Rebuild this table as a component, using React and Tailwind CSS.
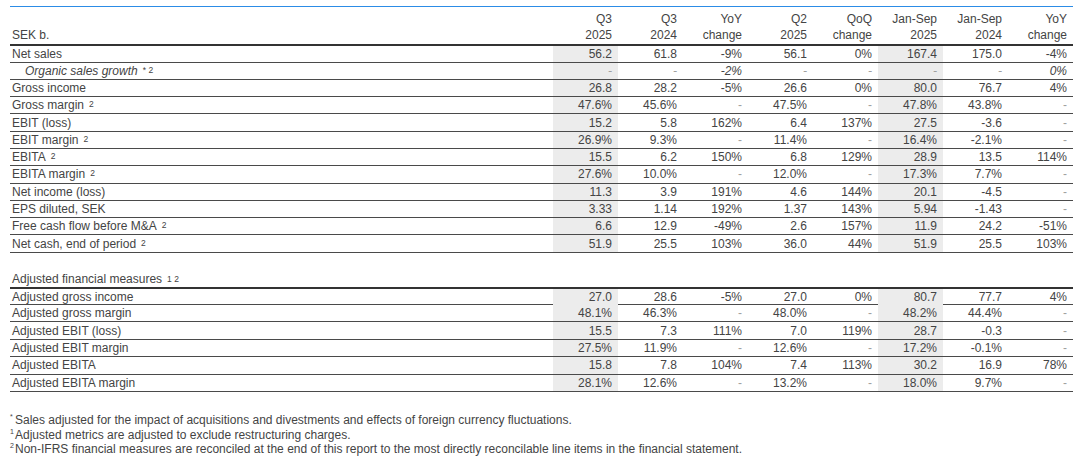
const cols = ["Q3|2025", "Q3|2024", "YoY|change", "Q2|2025", "QoQ|change", "Jan-Sep|2025", "Jan-Sep|2024", "YoY|change"];

const main = [
  { label: "Net sales", v: ["56.2", "61.8", "-9%", "56.1", "0%", "167.4", "175.0", "-4%"] },
  { label: "Organic sales growth", sup: "* 2", italic: true, v: ["-", "-", "-2%", "-", "-", "-", "-", "0%"] },
  { label: "Gross income", v: ["26.8", "28.2", "-5%", "26.6", "0%", "80.0", "76.7", "4%"] },
  { label: "Gross margin", sup: "2", v: ["47.6%", "45.6%", "-", "47.5%", "-", "47.8%", "43.8%", "-"] },
  { label: "EBIT (loss)", v: ["15.2", "5.8", "162%", "6.4", "137%", "27.5", "-3.6", "-"] },
  { label: "EBIT margin", sup: "2", v: ["26.9%", "9.3%", "-", "11.4%", "-", "16.4%", "-2.1%", "-"] },
  { label: "EBITA", sup: "2", v: ["15.5", "6.2", "150%", "6.8", "129%", "28.9", "13.5", "114%"] },
  { label: "EBITA margin", sup: "2", v: ["27.6%", "10.0%", "-", "12.0%", "-", "17.3%", "7.7%", "-"] },
  { label: "Net income (loss)", v: ["11.3", "3.9", "191%", "4.6", "144%", "20.1", "-4.5", "-"] },
  { label: "EPS diluted, SEK", v: ["3.33", "1.14", "192%", "1.37", "143%", "5.94", "-1.43", "-"] },
  { label: "Free cash flow before M&A", sup: "2", v: ["6.6", "12.9", "-49%", "2.6", "157%", "11.9", "24.2", "-51%"] },
  { label: "Net cash, end of period", sup: "2", v: ["51.9", "25.5", "103%", "36.0", "44%", "51.9", "25.5", "103%"] },
];

const adjusted = [
  { label: "Adjusted gross income", v: ["27.0", "28.6", "-5%", "27.0", "0%", "80.7", "77.7", "4%"] },
  { label: "Adjusted gross margin", v: ["48.1%", "46.3%", "-", "48.0%", "-", "48.2%", "44.4%", "-"] },
  { label: "Adjusted EBIT (loss)", v: ["15.5", "7.3", "111%", "7.0", "119%", "28.7", "-0.3", "-"] },
  { label: "Adjusted EBIT margin", v: ["27.5%", "11.9%", "-", "12.6%", "-", "17.2%", "-0.1%", "-"] },
  { label: "Adjusted EBITA", v: ["15.8", "7.8", "104%", "7.4", "113%", "30.2", "16.9", "78%"] },
  { label: "Adjusted EBITA margin", v: ["28.1%", "12.6%", "-", "13.2%", "-", "18.0%", "9.7%", "-"] },
];

const grid = "grid grid-cols-[543px_repeat(8,65px)]";

const Row = ({ row, h }) => (
  <div className={`${grid} ${h} border-b border-[#4a4a4a] items-stretch`}>
    <div className={`flex items-center ${row.italic ? "pl-[15px] italic" : "pl-[2px]"}`}>
      {row.label}
      {row.sup && <sup className="ml-[5px] text-[8.5px] not-italic relative -top-[1px]">{row.sup}</sup>}
    </div>
    {row.v.map((x, i) => (
      <div
        key={i}
        className={`flex items-center justify-end pr-[6px] ${i === 0 || i === 5 ? "bg-[#ececec]" : ""} ${
          x === "-" ? "text-[#a0a0a0]" : ""
        } ${row.italic ? "italic" : ""}`}
      >
        {x}
      </div>
    ))}
  </div>
);

export default function App() {
  return (
    <div className="w-[1080px] h-[461px] bg-white text-[#444] text-[12px] leading-[16px] font-['Liberation_Sans',Arial,sans-serif] overflow-hidden">
      <div className="ml-[10px] w-[1063px] pt-[6px]">
        <div className="border-t-[1.5px] border-[#2c8ce6]" />
        <div className={`${grid} h-[39px] items-end border-b-2 border-[#333] pb-[1px]`}>
          <div className="pl-[2px]">SEK b.</div>
          {cols.map((c, i) => (
            <div key={i} className="flex flex-col items-end pr-[6px]">
              <span>{c.split("|")[0]}</span>
              <span>{c.split("|")[1]}</span>
            </div>
          ))}
        </div>
        {main.map((r, i) => (
          <Row key={i} row={r} h={i === 0 ? "h-[16.5px]" : "h-[17.3px]"} />
        ))}
        <div className={`${grid} h-[36px] items-end border-b-2 border-[#333]`}>
          <div className="pl-[2px] leading-[14px] pb-[1px]">
            Adjusted financial measures
            <sup className="ml-[5px] text-[8.5px] relative -top-[1px]">1 2</sup>
          </div>
        </div>
        {adjusted.map((r, i) => (
          <Row key={i} row={r} h={i === 0 ? "h-[16.3px]" : "h-[17.4px]"} />
        ))}
        <div className="mt-[21px] leading-[14.5px]">
          <div className="flex">
            <span className="w-[5px] text-[7px] leading-[8px]">*</span>
            <span>Sales adjusted for the impact of acquisitions and divestments and effects of foreign currency fluctuations.</span>
          </div>
          <div className="flex">
            <span className="w-[5px] text-[7px] leading-[8px]">1</span>
            <span>Adjusted metrics are adjusted to exclude restructuring charges.</span>
          </div>
          <div className="flex">
            <span className="w-[5px] text-[7px] leading-[8px]">2</span>
            <span>Non-IFRS financial measures are reconciled at the end of this report to the most directly reconcilable line items in the financial statement.</span>
          </div>
        </div>
      </div>
    </div>
  );
}
